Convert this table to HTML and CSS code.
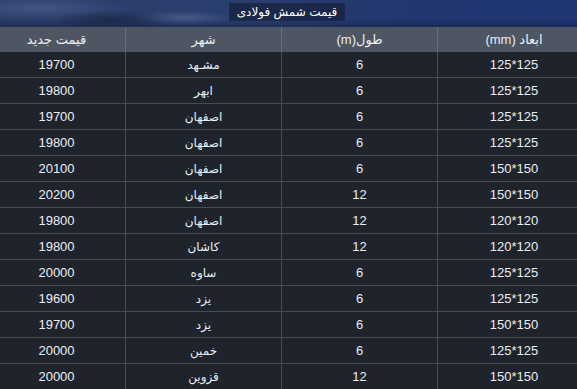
FILE: index.html
```html
<!DOCTYPE html>
<html lang="fa" dir="rtl">
<head>
<meta charset="utf-8">
<link rel="stylesheet" href="styles.css">
</head>
<body>
<div class="banner">
  <div class="title">قیمت شمش فولادی</div>
</div>
<table class="prices">
  <thead>
    <tr><th class="c-dim">ابعاد (mm)</th><th class="c-len">طول(m)</th><th class="c-city">شهر</th><th class="c-price">قیمت جدید</th></tr>
  </thead>
  <tbody>
    <tr><td class="c-dim">125*125</td><td class="c-len">6</td><td class="c-city">مشـهد</td><td class="c-price">19700</td></tr>
    <tr><td class="c-dim">125*125</td><td class="c-len">6</td><td class="c-city">ابهر</td><td class="c-price">19800</td></tr>
    <tr><td class="c-dim">125*125</td><td class="c-len">6</td><td class="c-city">اصفهان</td><td class="c-price">19700</td></tr>
    <tr><td class="c-dim">125*125</td><td class="c-len">6</td><td class="c-city">اصفهان</td><td class="c-price">19800</td></tr>
    <tr><td class="c-dim">150*150</td><td class="c-len">6</td><td class="c-city">اصفهان</td><td class="c-price">20100</td></tr>
    <tr><td class="c-dim">150*150</td><td class="c-len">12</td><td class="c-city">اصفهان</td><td class="c-price">20200</td></tr>
    <tr><td class="c-dim">120*120</td><td class="c-len">12</td><td class="c-city">اصفهان</td><td class="c-price">19800</td></tr>
    <tr><td class="c-dim">120*120</td><td class="c-len">12</td><td class="c-city">کاشان</td><td class="c-price">19800</td></tr>
    <tr><td class="c-dim">125*125</td><td class="c-len">6</td><td class="c-city">ساوه</td><td class="c-price">20000</td></tr>
    <tr><td class="c-dim">125*125</td><td class="c-len">6</td><td class="c-city">یزد</td><td class="c-price">19600</td></tr>
    <tr><td class="c-dim">150*150</td><td class="c-len">6</td><td class="c-city">یزد</td><td class="c-price">19700</td></tr>
    <tr><td class="c-dim">125*125</td><td class="c-len">6</td><td class="c-city">خمین</td><td class="c-price">20000</td></tr>
    <tr><td class="c-dim">150*150</td><td class="c-len">12</td><td class="c-city">قزوین</td><td class="c-price">20000</td></tr>
  </tbody>
</table>
</body>
</html>
```

FILE: styles.css
```css
html, body {
  margin: 0;
  padding: 0;
  background: #1f242c;
}
body {
  width: 577px;
  overflow: hidden;
  font-family: "Liberation Sans", "DejaVu Sans", sans-serif;
  font-size: 13px;
  color: #e9eef5;
}
.banner {
  height: 27px;
  display: flex;
  justify-content: center;
  align-items: flex-start;
  background:
    linear-gradient(to bottom, rgba(255,255,255,0) 70%, rgba(10,20,50,0.35) 100%),
    radial-gradient(ellipse 60px 10px at 110px 20px, rgba(20,28,50,0.55), rgba(20,28,50,0) 100%),
    radial-gradient(ellipse 50px 8px at 185px 18px, rgba(120,140,180,0.35), rgba(120,140,180,0) 100%),
    radial-gradient(ellipse 90px 12px at 40px 8px, rgba(110,130,175,0.35), rgba(110,130,175,0) 100%),
    linear-gradient(to right, #2b3d68 0%, #2a3e6e 40%, #22376f 70%, #1f3673 100%);
}
.title {
  margin-top: 3px;
  height: 18px;
  line-height: 18px;
  padding: 0 8px;
  margin-left: -3px;
  background: rgba(24, 34, 64, 0.78);
  color: #ffffff;
  font-size: 12px;
}
.prices {
  width: 577px;
  table-layout: fixed;
  border-collapse: separate;
  border-spacing: 0;
}
.prices th, .prices td {
  padding: 0;
  text-align: center;
  font-weight: normal;
  border-left: 1px solid #474c55;
  white-space: nowrap;
}
.prices th {
  height: 25px;
  background: #4f5663;
  border-left-color: #666d79;
}
.prices td {
  height: 25px;
  border-bottom: 1px solid #474c55;
}
.prices td.c-city { font-size: 12px; }
.prices .c-dim { width: 126px; padding-left: 13px; }
.prices .c-len { width: 155px; }
.prices .c-city { width: 155px; }
.prices .c-price { width: 113px; padding-right: 12px; border-left: 0; }
```
